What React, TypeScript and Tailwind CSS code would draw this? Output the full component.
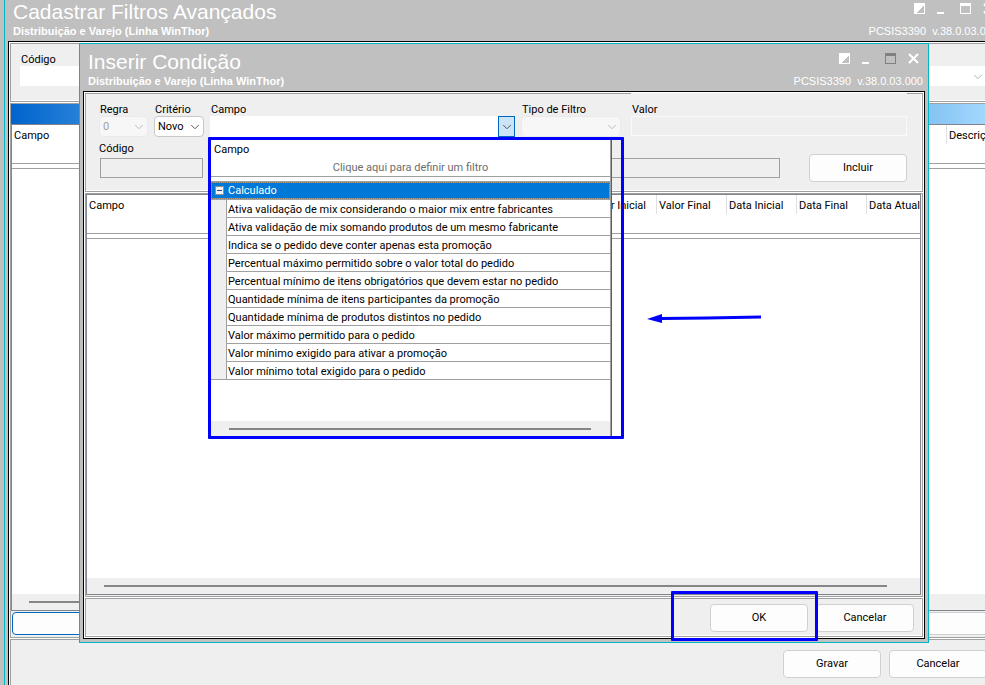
import React from 'react';
import { ChevronDown } from 'lucide-react';

const campos = [
  'Ativa validação de mix considerando o maior mix entre fabricantes',
  'Ativa validação de mix somando produtos de um mesmo fabricante',
  'Indica se o pedido deve conter apenas esta promoção',
  'Percentual máximo permitido sobre o valor total do pedido',
  'Percentual mínimo de itens obrigatórios que devem estar no pedido',
  'Quantidade mínima de itens participantes da promoção',
  'Quantidade mínima de produtos distintos no pedido',
  'Valor máximo permitido para o pedido',
  'Valor mínimo exigido para ativar a promoção',
  'Valor mínimo total exigido para o pedido',
];

const colunas = ['Valor Inicial', 'Valor Final', 'Data Inicial', 'Data Final'];

function WindowIcons({ maximizable }: { maximizable: boolean }) {
  return (
    <div className="flex h-4 items-center gap-3 text-white">
      <button type="button" aria-label="Alternar modo">
        <svg width="11" height="11" viewBox="0 0 11 11" shapeRendering="crispEdges" className="block">
          <path d="M0 0h11v11H0z" fill="#fff" />
          <path d="M10 2v8H2z" fill="#c0c0c0" />
        </svg>
      </button>
      <button type="button" aria-label="Minimizar">
        <svg width="11" height="11" viewBox="0 0 11 11" shapeRendering="crispEdges" className="block">
          <path d="M0 9h7v2H0z" fill="#fff" />
        </svg>
      </button>
      <button type="button" aria-label="Maximizar" className={maximizable ? 'text-white' : 'text-[#808080]'}>
        <svg width="11" height="11" viewBox="0 0 11 11" shapeRendering="crispEdges" className="block">
          <path d="M0 0h11v11H0zM1 3v7h9V3z" fill="currentColor" fillRule="evenodd" />
        </svg>
      </button>
      <button type="button" aria-label="Fechar">
        <svg width="11" height="11" viewBox="0 0 11 11" className="block">
          <path d="M1 1l9 9M10 1l-9 9" stroke="#fff" strokeWidth="2" />
        </svg>
      </button>
    </div>
  );
}

function Window({
  title,
  maximizable = false,
  className,
  children,
}: {
  title: string;
  maximizable?: boolean;
  className: string;
  children: React.ReactNode;
}) {
  return (
    <section className={`flex flex-col border border-[#00b7c8] bg-[#c0c0c0] px-[3px] pb-[3px] ${className}`}>
      <header className="flex h-[47px] shrink-0 justify-between pl-[5px] pr-[2px] pt-1.5 font-['Liberation_Sans',Arial,sans-serif] text-white">
        <div>
          <h1 className="text-[21px] leading-6">{title}</h1>
          <p className="text-[11px] font-bold leading-[14px]">Distribuição e Varejo (Linha WinThor)</p>
        </div>
        <div className="flex flex-col items-end justify-between pb-[3px]">
          <div className="pr-1">
            <WindowIcons maximizable={maximizable} />
          </div>
          <p className="whitespace-pre text-[11px] leading-[14px]">PCSIS3390  v.38.0.03.000</p>
        </div>
      </header>
      <div className="flex flex-1 flex-col gap-px border border-black bg-white p-px">{children}</div>
    </section>
  );
}

function Panel({ className = '', children }: { className?: string; children: React.ReactNode }) {
  return (
    <div className={`relative border border-[#a0a0a0] bg-[#efefef] ${className}`}>{children}</div>
  );
}

function Button({ children }: { children: React.ReactNode }) {
  return (
    <button
      type="button"
      className="h-7 w-[98px] shrink-0 rounded-[4px] border border-[#d0d0d0] bg-[#fdfdfd] text-center"
    >
      {children}
    </button>
  );
}

function Label({ htmlFor, children }: { htmlFor: string; children: React.ReactNode }) {
  return (
    <label htmlFor={htmlFor} className="block h-[14px] pl-px leading-4">
      {children}
    </label>
  );
}

function Select({ id, value, disabled = false }: { id: string; value: string; disabled?: boolean }) {
  return (
    <div className="relative">
      <select
        id={id}
        disabled={disabled}
        className="block h-[21px] w-full appearance-none rounded-[4px] border border-[#c8c8c8] bg-white pl-[3px] pt-px text-black opacity-100 disabled:border-[#eaeaea] disabled:bg-[#f7f7f7] disabled:text-[#a0a0a0]"
      >
        <option>{value}</option>
      </select>
      <ChevronDown
        size={14}
        strokeWidth={1.5}
        className={`pointer-events-none absolute right-0.5 top-1 ${disabled ? 'text-[#b4b4b4]' : 'text-[#404040]'}`}
      />
    </div>
  );
}

function HeaderCell({ children, first = false }: { children: React.ReactNode; first?: boolean }) {
  return (
    <th className="h-[38px] overflow-hidden p-0 text-left align-top font-normal">
      <div className={`h-[19px] whitespace-nowrap pl-0.5 pt-1 leading-[14px] ${first ? '' : 'border-l border-[#e0e0e0]'}`}>
        {children}
      </div>
    </th>
  );
}

function CampoMenu() {
  return (
    <div className="absolute left-px top-full z-10 w-[401px] border-r border-[#0078d7] bg-white">
      <div className="flex h-[300px] flex-col border-r border-[#a0a0a0]">
        <div className="border-b border-[#a0a0a0] pb-0.5 pt-[5px]">
          <p className="h-[14px] pl-[3px] leading-4">Campo</p>
          <p className="mt-1 h-[14px] text-center leading-4 text-[#6d6d6d]">Clique aqui para definir um filtro</p>
        </div>
        <div className="mt-1 border-y border-[#a0a0a0] bg-[#8a7a60]">
          <div className="flex h-[17px] items-center gap-1 border border-dotted border-[#ff8c1a] bg-[#0078d7] bg-clip-padding pl-[3px] leading-4 text-white">
            <button type="button" aria-label="Recolher Calculado">
              <svg width="9" height="9" viewBox="0 0 9 9" shapeRendering="crispEdges" className="block">
                <path d="M0 0h9v9H0z" fill="#8f8f8f" />
                <path d="M1 1h7v7H1z" fill="#f4f4f4" />
                <path d="M2 4h5v1H2z" fill="#1f3f9f" />
              </svg>
            </button>
            <span className="pt-px">Calculado</span>
          </div>
        </div>
        <div className="flex border-b border-[#a0a0a0]">
          <div className="w-[15px] shrink-0 bg-[#efefef]" />
          <ul role="listbox" aria-label="Calculado" className="flex-1 divide-y divide-[#a0a0a0] border-l border-[#a0a0a0]">
            {campos.map((campo, i) => (
              <li
                key={campo}
                role="option"
                aria-selected={false}
                className={`whitespace-nowrap pl-px leading-5 ${i === campos.length - 1 ? 'h-[17px]' : 'h-[18px]'}`}
              >
                {campo}
              </li>
            ))}
          </ul>
        </div>
        <div className="mt-auto h-4 bg-[#efefef] pl-[18px] pr-[19px] pt-[7px]">
          <div className="h-0.5 bg-[#868686]" />
        </div>
      </div>
    </div>
  );
}

function InserirCondicao() {
  return (
    <Window title="Inserir Condição" className="absolute left-[79px] right-14 top-[43px]">
      <Panel>
        <form className="border-b border-r border-white pb-3 pl-[13px] pr-[14px]">
          <div className="flex gap-1.5">
            <div className="w-[49px] pt-2">
              <Label htmlFor="regra">Regra</Label>
              <Select id="regra" value="0" disabled />
            </div>
            <div className="w-[50px] pt-2">
              <Label htmlFor="criterio">Critério</Label>
              <Select id="criterio" value="Novo" />
            </div>
            <div className="relative w-[305px] pt-2">
              <Label htmlFor="campo">Campo</Label>
              <div className="flex h-[21px]">
                <input id="campo" className="min-w-0 flex-1 bg-white" />
                <button
                  type="button"
                  aria-label="Abrir lista de campos"
                  className="flex w-[17px] items-center justify-center border border-[#0067c0] bg-[#cce4f7] text-[#404040]"
                >
                  <ChevronDown size={14} strokeWidth={1.5} className="shrink-0" />
                </button>
              </div>
              <CampoMenu />
              <div className="pointer-events-none absolute -left-0.5 top-full z-20 h-[302px] w-[416px] rounded-[1px] border-[3px] border-[#0000ff]" />
            </div>
            <div className="w-[100px] pt-2">
              <Label htmlFor="tipo">Tipo de Filtro</Label>
              <Select id="tipo" value="" disabled />
            </div>
            <div className="relative -mt-px ml-1 flex-1 bg-[#efefef] pt-[9px]">
              <Label htmlFor="valor">Valor</Label>
              <input id="valor" className="block h-5 w-full border border-[#fafafa] bg-[#efefef]" />
            </div>
          </div>
          <div className="mt-1 flex items-end">
            <div className="-ml-px">
              <Label htmlFor="codigo-regra">Código</Label>
              <input
                id="codigo-regra"
                className="ml-0.5 mt-[3px] block h-5 w-[103px] border border-[#a0a0a0] bg-[#efefef]"
              />
            </div>
            <input aria-label="Descrição do código" className="ml-2 h-5 min-w-0 flex-1 border border-[#a0a0a0] bg-[#efefef]" />
            <div className="-mb-1 ml-[29px]">
              <Button>Incluir</Button>
            </div>
          </div>
        </form>
      </Panel>

      <Panel className="pb-px pr-px">
        <div className="flex h-[401px] flex-col border border-[#80868e] bg-white">
          <table className="w-full table-fixed border-b border-[#a0a0a0]">
            <colgroup>
              <col />
              <col className="w-[70px]" />
              <col className="w-[70px]" />
              <col className="w-[70px]" />
              <col className="w-[70px]" />
              <col className="w-[54px]" />
            </colgroup>
            <thead>
              <tr>
                <HeaderCell first>Campo</HeaderCell>
                {colunas.map((coluna) => (
                  <HeaderCell key={coluna}>{coluna}</HeaderCell>
                ))}
                <HeaderCell>Data Atual</HeaderCell>
              </tr>
            </thead>
          </table>
          <div className="mt-1 border-b border-[#a0a0a0]" />
          <div className="mt-auto h-4 bg-[#efefef] pl-[17px] pr-[33px] pt-[7px]">
            <div className="h-0.5 bg-[#868686]" />
          </div>
        </div>
        <svg width="116" height="14" viewBox="0 0 116 14" className="absolute left-[561px] top-[118px]">
          <path d="M14 6.5L60 6l54-1" stroke="#0000ff" strokeWidth="3" fill="none" />
          <path d="M0 7l15-5v9z" fill="#0000ff" />
        </svg>
      </Panel>

      <Panel>
        <div className="flex justify-end gap-2 border-b border-r border-white pb-[3px] pr-[7px] pt-[5px]">
          <Button>OK</Button>
          <Button>Cancelar</Button>
        </div>
        <div className="pointer-events-none absolute -top-2 right-[104px] h-[50px] w-[147px] rounded-[1px] border-[3px] border-[#0000ff]" />
      </Panel>
    </Window>
  );
}

export default function App() {
  return (
    <main className="relative flex h-screen flex-col overflow-hidden bg-[#c0c0c0] pl-1 font-['Roboto',sans-serif] text-[11px] text-black">
      <Window title="Cadastrar Filtros Avançados" maximizable className="-mb-3 -mr-[19px] -mt-[7px] flex-1">
        <Panel>
          <div className="flex h-[57px] items-start border-b border-white pl-[9px] pr-[10px] pt-2">
            <div className="w-[300px]">
              <Label htmlFor="codigo">Código</Label>
              <input id="codigo" className="block h-5 w-full bg-white" />
            </div>
            <div className="relative flex-1 pt-[14px]">
              <select aria-label="Filtro" className="block h-5 w-full appearance-none bg-white" />
              <ChevronDown size={14} strokeWidth={1.5} className="absolute bottom-0.5 right-0.5 text-[#a8a8a8]" />
            </div>
          </div>
        </Panel>

        <Panel className="flex flex-1 flex-col pb-0.5">
          <div className="h-5 bg-[linear-gradient(to_right,#0064cc,#2680d8_7%,#84c3f3_93%,#a8dcff)]" />
          <div className="flex flex-1 flex-col border border-[#80868e] bg-white">
            <table className="w-full table-fixed border-b border-[#a0a0a0]">
              <colgroup>
                <col />
                <col className="w-[50px]" />
              </colgroup>
              <thead>
                <tr>
                  <HeaderCell first>Campo</HeaderCell>
                  <HeaderCell>Descrição</HeaderCell>
                </tr>
              </thead>
            </table>
            <div className="mt-1 border-b border-[#a0a0a0]" />
            <div className="mt-auto h-4 bg-[#efefef] pl-[17px] pr-24 pt-[7px]">
              <div className="h-0.5 bg-[#868686]" />
            </div>
          </div>
          <div className="mt-px flex px-px">
            <button
              type="button"
              aria-label="Adicionar condição"
              className="h-[23px] w-[400px] rounded-[4px] border border-[#0067c0] bg-[#fdfdfd]"
            />
            <button
              type="button"
              aria-label="Remover condição"
              className="h-[23px] flex-1 rounded-[4px] border border-[#d0d0d0] bg-[#fdfdfd]"
            />
          </div>
        </Panel>

        <Panel>
          <div className="flex justify-end gap-2 pb-3 pr-2.5 pt-[10px]">
            <Button>Gravar</Button>
            <Button>Cancelar</Button>
          </div>
        </Panel>
      </Window>
      <InserirCondicao />
    </main>
  );
}
